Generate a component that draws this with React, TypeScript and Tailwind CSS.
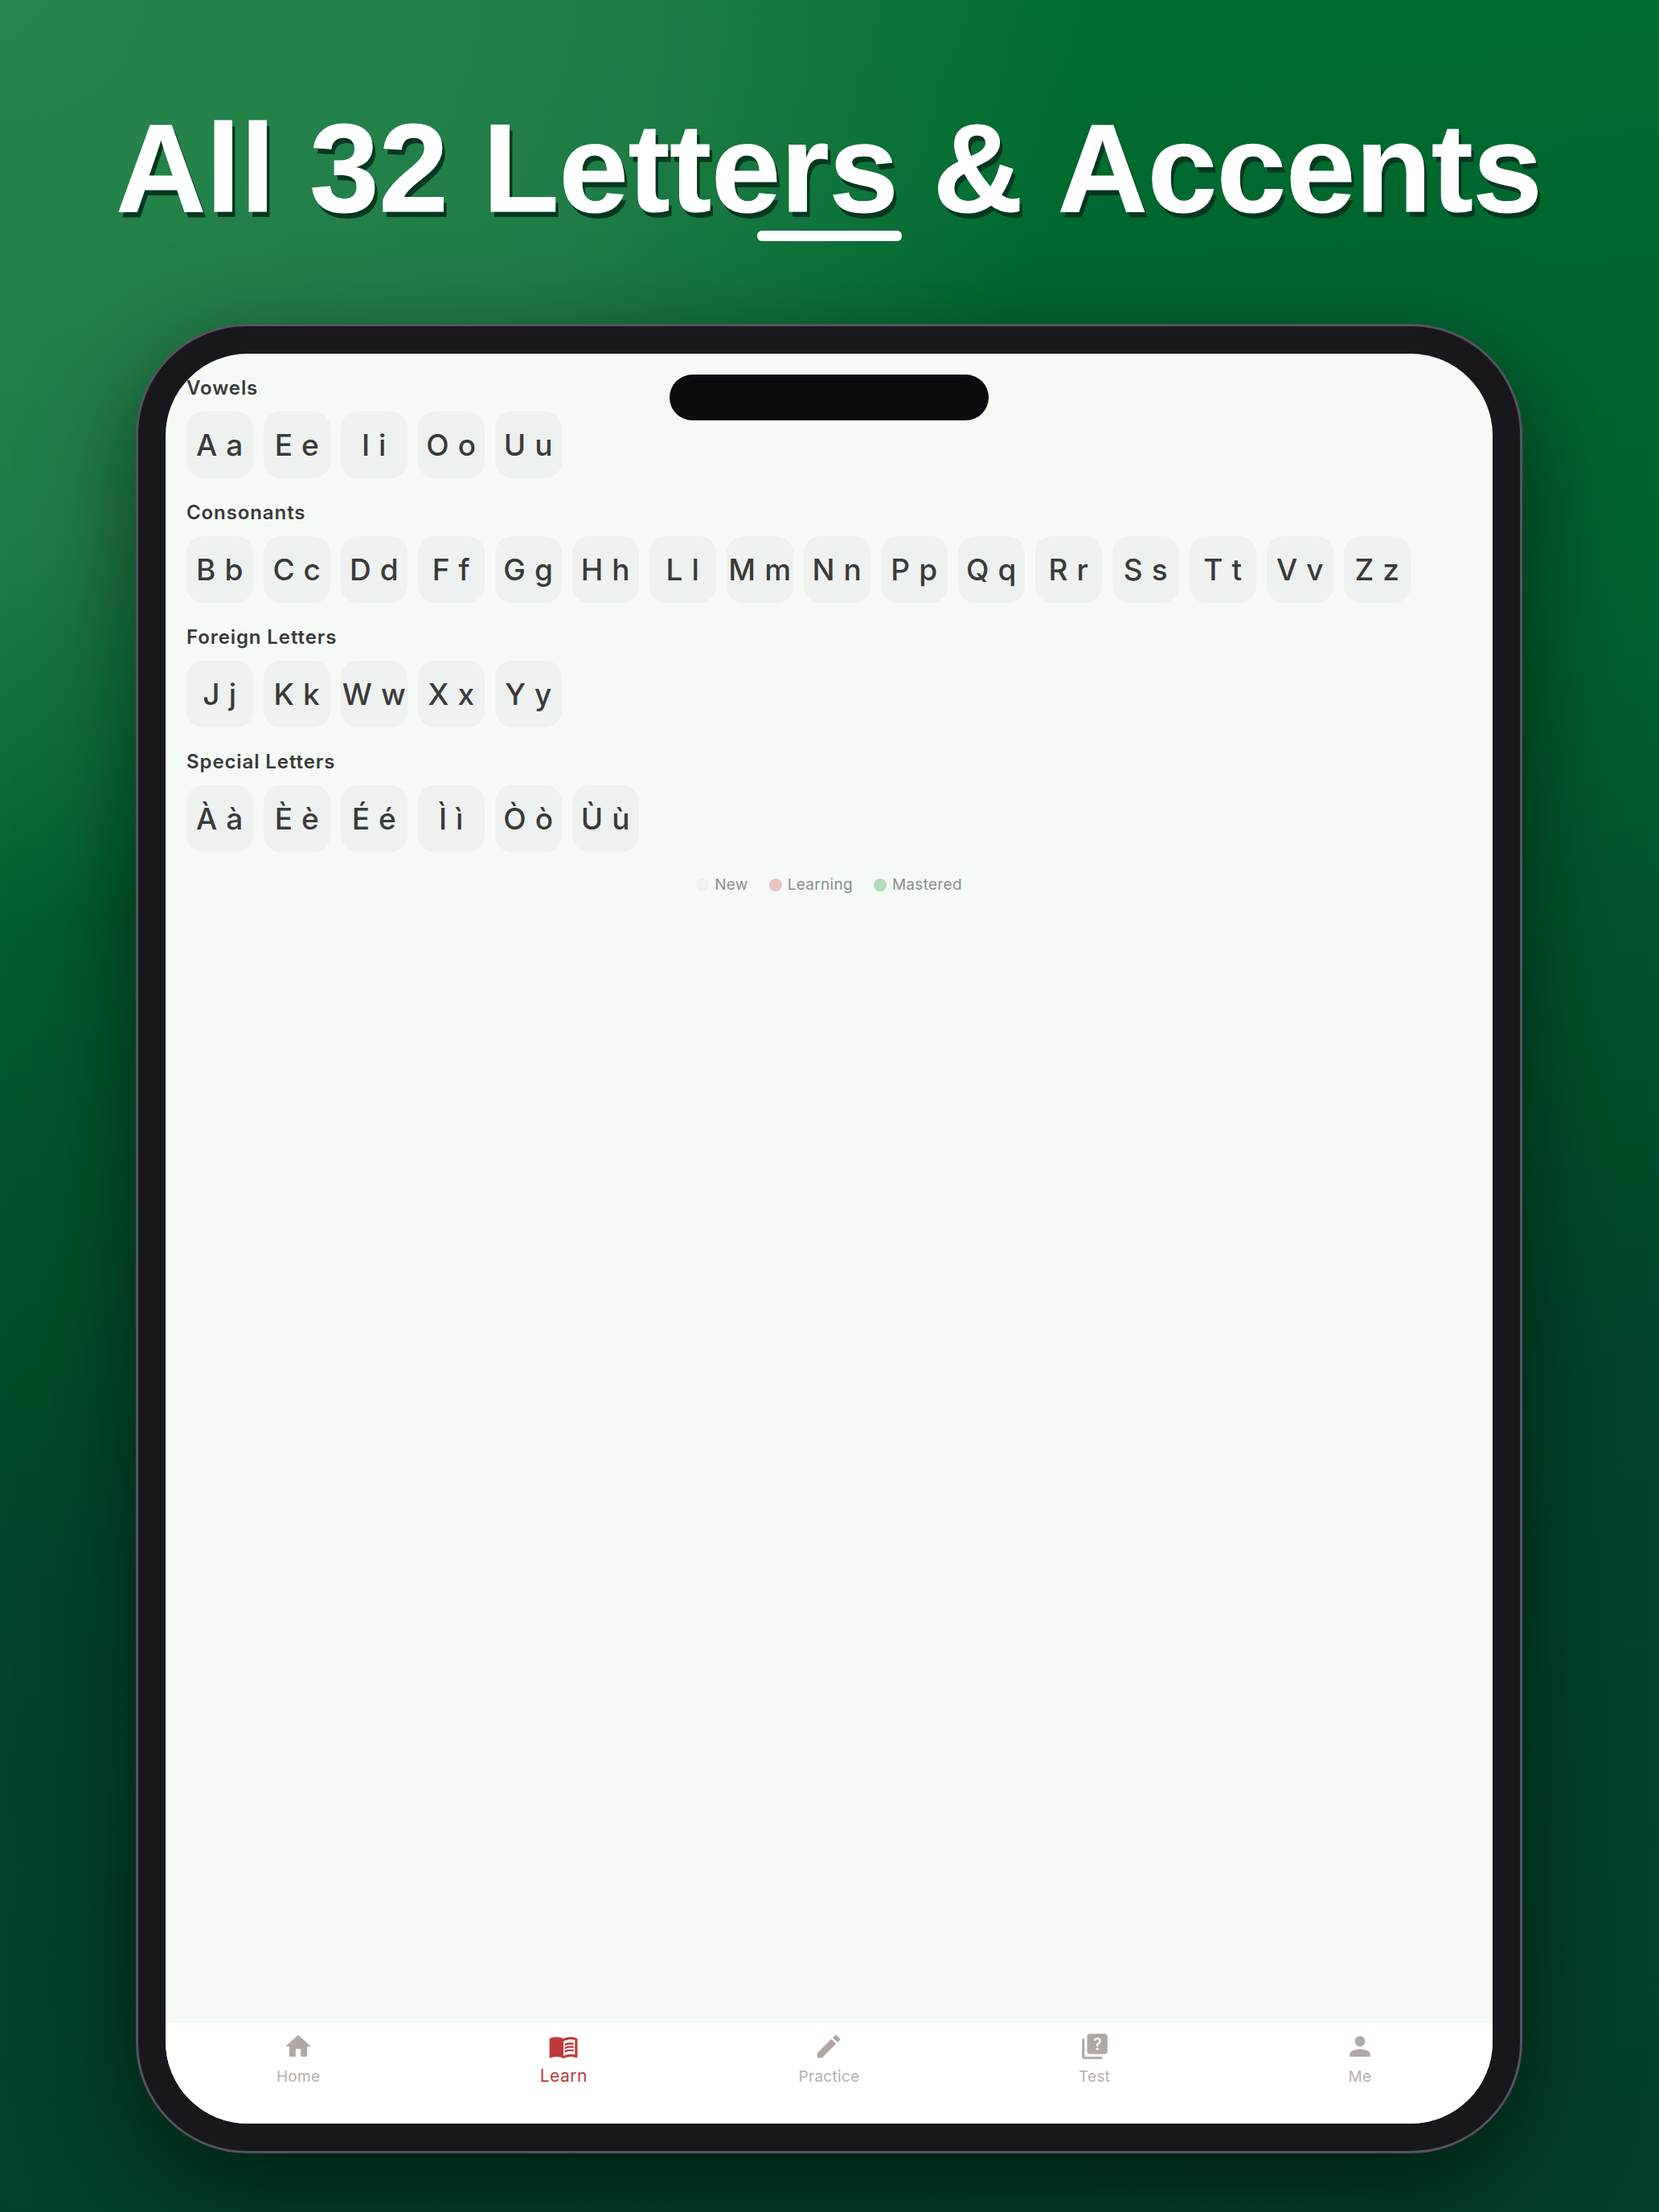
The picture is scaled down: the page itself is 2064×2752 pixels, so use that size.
import { MdEdit, MdHome, MdMenuBook, MdPerson, MdQuiz } from "react-icons/md";

const sections = [
    { title: "Vowels", letters: ["A a", "E e", "I i", "O o", "U u"] },
    {
        title: "Consonants",
        letters: ["B b", "C c", "D d", "F f", "G g", "H h", "L l", "M m", "N n", "P p", "Q q", "R r", "S s", "T t", "V v", "Z z"],
    },
    { title: "Foreign Letters", letters: ["J j", "K k", "W w", "X x", "Y y"] },
    { title: "Special Letters", letters: ["À à", "È è", "É é", "Ì ì", "Ò ò", "Ù ù"] },
];

const tabs = [
    { label: "Home", Icon: MdHome },
    { label: "Learn", Icon: MdMenuBook, active: true },
    { label: "Practice", Icon: MdEdit },
    { label: "Test", Icon: MdQuiz },
    { label: "Me", Icon: MdPerson },
];

const legend = [
    { label: "New", dot: "bg-[#edf1ef]" },
    { label: "Learning", dot: "bg-[#e8c5c5]" },
    { label: "Mastered", dot: "bg-[#b3d9c2]" },
];

export default function App() {
    return (
        <div className="flex h-[2752px] w-[2064px] flex-col items-center overflow-hidden bg-[radial-gradient(1350px_1150px_at_0%_0%,rgba(40,134,76,1)_0%,rgba(34,126,72,0.92)_58%,rgba(0,110,53,0)_100%),linear-gradient(172deg,#00702f_0%,#005f2e_35%,#00442a_65%,#043f28_100%)] font-['Inter',sans-serif]">
            <div className="relative mt-[120px] mr-[1px] font-['Liberation_Sans',Arial,sans-serif] text-[155px] leading-[180px] font-bold whitespace-nowrap text-white [font-kerning:none] [-webkit-text-stroke:1px_white] [text-shadow:4px_7px_0_#05381f]">
                All 32 Letters &amp; Accents
                <div className="absolute top-[167px] left-[798px] h-[13px] w-[180px] rounded-[6px] bg-white" />
            </div>

            <div className="relative mt-[103px] mr-[1px] flex h-[2276px] w-[1725px] flex-col rounded-[138px] border-[3px] border-[#55535f] bg-[#18171c] p-[34px] shadow-[0_40px_130px_rgba(0,0,0,0.55)]">
                <div className="flex flex-1 flex-col overflow-hidden rounded-[102px] bg-[#f5faf6]">
                    <div className="flex-1 px-[26px] pt-[28px]">
                        {sections.map((section) => (
                            <div key={section.title} className="mb-[28px]">
                                <div className="mb-[15px] text-[24px] leading-[29px] font-semibold tracking-[0.9px] text-[#3a3a3a]">{section.title}</div>
                                <div className="flex gap-[13px]">
                                    {section.letters.map((letter) => (
                                        <div
                                            key={letter}
                                            className="flex h-[83px] w-[83px] items-center justify-center rounded-[21px] bg-[#edf1ef] pt-[1px] text-[37px] font-medium tracking-[0.6px] whitespace-pre text-[#3a3a3a]"
                                        >
                                            {letter}
                                        </div>
                                    ))}
                                </div>
                            </div>
                        ))}
                        <div className="flex justify-center gap-[26px] pt-[1px]">
                            {legend.map((item) => (
                                <div key={item.label} className="flex items-center gap-[7px]">
                                    <span className={`h-[16px] w-[16px] rounded-full ${item.dot}`} />
                                    <span className="text-[19px] leading-[24px] tracking-[0.3px] text-[#8b8f8c]">{item.label}</span>
                                </div>
                            ))}
                        </div>
                    </div>

                    <div className="grid h-[125px] grid-cols-5 bg-white">
                        {tabs.map(({ label, Icon, active }) => (
                            <div key={label} className={`flex flex-col items-center pt-[10px] ${active ? "text-[#c0393b]" : "text-[#b0a8a4]"}`}>
                                <Icon className="h-[38px] w-[38px]" />
                                {active ? (
                                    <span className="mt-[5px] text-[21px] leading-[26px] tracking-[0.5px]">{label}</span>
                                ) : (
                                    <span className="mt-[7px] text-[19px] leading-[24px] tracking-[0.3px] opacity-90">{label}</span>
                                )}
                            </div>
                        ))}
                    </div>
                </div>

                <div className="absolute top-[60px] left-[661px] h-[57px] w-[397px] rounded-full bg-[#0b0c0e]" />
            </div>
        </div>
    );
}
